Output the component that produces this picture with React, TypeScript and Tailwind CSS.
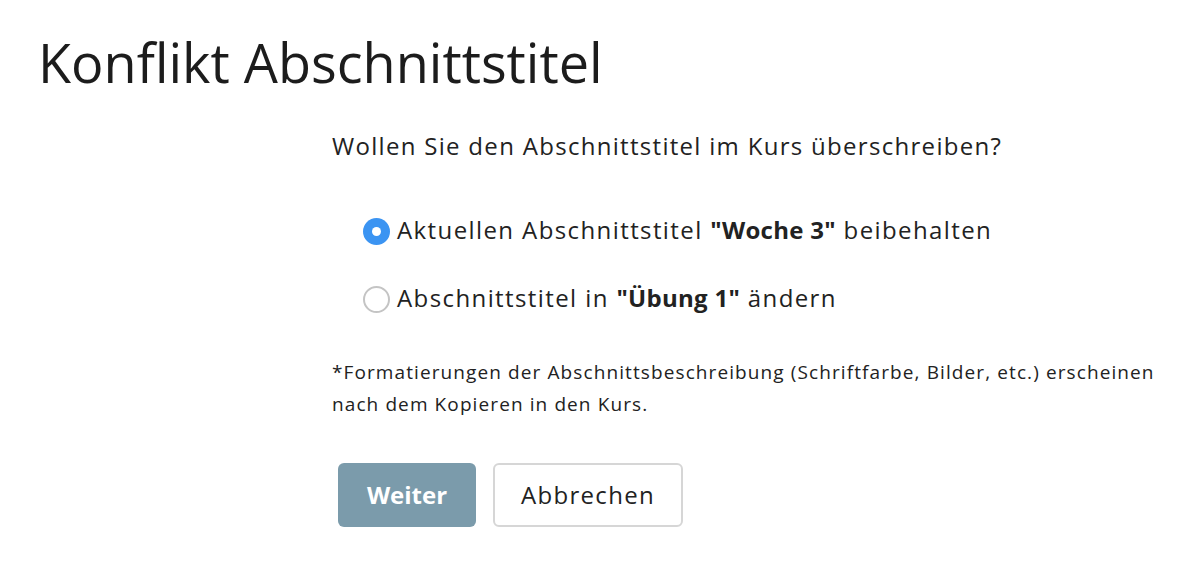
import { useState } from 'react';

const options = [
  { id: 'keep', pre: 'Aktuellen Abschnittstitel ', bold: '"Woche 3"', post: ' beibehalten' },
  { id: 'change', pre: 'Abschnittstitel in ', bold: '"Übung 1"', post: ' ändern' },
];

export default function App() {
  const [choice, setChoice] = useState('keep');

  return (
    <div className="min-h-[577px] w-[1200px] bg-white text-[#222] font-['Open_Sans',sans-serif]">
      <h1 className="pl-[38px] pt-[32px] text-[54px] leading-[60px] font-normal text-[#1c1c1c]">
        Konflikt Abschnittstitel
      </h1>

      <div className="ml-[332px] mt-[39px]">
        <p className="text-[24px] leading-[30px] tracking-[1.3px]">
          Wollen Sie den Abschnittstitel im Kurs überschreiben?
        </p>

        <div className="mt-[54px] ml-[31px] flex flex-col gap-[38px]">
          {options.map((o) => {
            const active = choice === o.id;
            return (
              <label
                key={o.id}
                className="flex items-center gap-[7px] cursor-pointer text-[24px] leading-[30px] tracking-[1.4px]"
              >
                <button
                  type="button"
                  onClick={() => setChoice(o.id)}
                  className={`flex h-[27px] w-[27px] translate-y-[1px] items-center justify-center rounded-full ${
                    active ? 'bg-[#3b94f2]' : 'border-2 border-[#c4c4c4] bg-white'
                  }`}
                >
                  {active && <span className="h-[9px] w-[9px] rounded-full bg-white" />}
                </button>
                <span>
                  {o.pre}
                  <b className="font-bold tracking-[0.3px]">{o.bold}</b>
                  {o.post}
                </span>
              </label>
            );
          })}
        </div>

        <p className="mt-[43px] w-[850px] text-[19px] leading-[32px] tracking-[1.1px]">
          *Formatierungen der Abschnittsbeschreibung (Schriftfarbe, Bilder, etc.) erscheinen nach dem Kopieren in den Kurs.
        </p>

        <div className="mt-[43px] ml-[6px] flex gap-[17px]">
          <button className="h-[64px] w-[138px] rounded-[6px] bg-[#7b9bab] text-[24px] font-bold text-white">
            Weiter
          </button>
          <button className="h-[64px] w-[190px] rounded-[6px] border-2 border-[#d6d6d6] bg-white text-[24px] tracking-[1.3px] text-[#222]">
            Abbrechen
          </button>
        </div>
      </div>
    </div>
  );
}
